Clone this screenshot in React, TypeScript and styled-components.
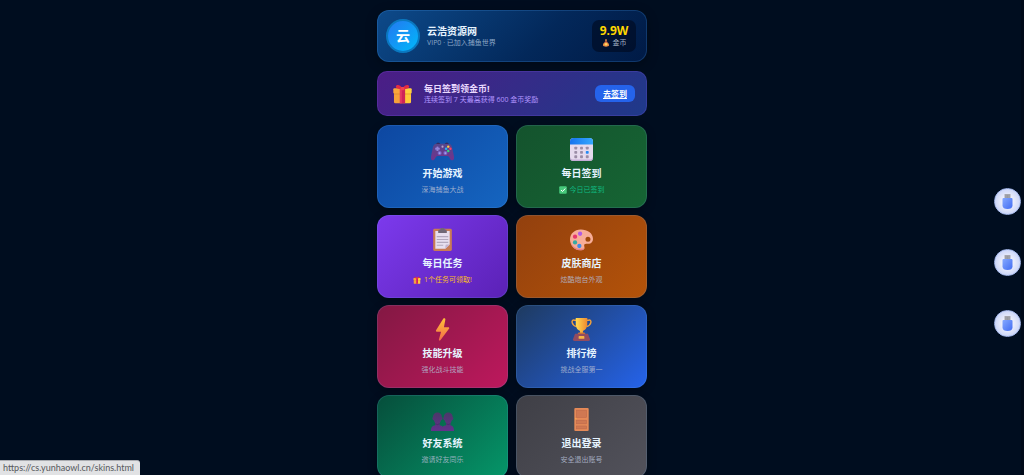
import React from 'react';
import styled, { createGlobalStyle } from 'styled-components';

const GlobalStyle = createGlobalStyle`
  * {
    box-sizing: border-box;
  }

  body {
    margin: 0;
    background: #000d1f;
    color: #e6f4ff;
    font-family: 'Open Sans', 'Noto Sans CJK SC', sans-serif;
  }

  h1, h2, h3, p {
    margin: 0;
  }

  a {
    color: inherit;
  }
`;

const Page = styled.div`
  height: 100vh;
  overflow-y: auto;
  scrollbar-width: none;
`;

const Container = styled.main`
  width: 100%;
  max-width: 270px;
  margin: 0 auto;
  padding: 10px 0;
  display: flex;
  flex-direction: column;
  gap: 9px;
`;

const Header = styled.header`
  display: flex;
  align-items: center;
  gap: 7px;
  min-height: 52px;
  padding: 7px 10px 7px 8px;
  border: 1px solid rgba(79, 172, 254, 0.2);
  border-radius: 12px;
  background: linear-gradient(135deg, #0d4a8a 0%, #03285a 60%, #001a45 100%);
  background-origin: border-box;
  box-shadow: 0 3px 12px rgba(0, 0, 0, 0.3);
`;

const Avatar = styled.div`
  display: flex;
  align-items: center;
  justify-content: center;
  width: 34px;
  height: 34px;
  border: 2px solid #0a78c0;
  border-radius: 50%;
  background: linear-gradient(135deg, #2478f0, #00b8fa);
  color: #fff;
  font-size: 14px;
  font-weight: 700;
  line-height: 20px;
`;

const HeaderText = styled.div`
  flex: 1;
`;

const UserName = styled.h1`
  font-size: 10px;
  line-height: 14px;
  font-weight: 700;
`;

const UserMeta = styled.p`
  font-size: 7px;
  line-height: 10px;
  color: #8ba6c6;
`;

const CoinBox = styled.div`
  min-width: 44px;
  padding: 4px 7px;
  border-radius: 7px;
  background: rgba(0, 8, 28, 0.6);
  text-align: center;
`;

const CoinValue = styled.div`
  color: #ffd700;
  font-size: 12px;
  line-height: 14px;
  font-weight: 700;
`;

const CoinLabel = styled.div`
  display: flex;
  align-items: center;
  justify-content: center;
  gap: 3px;
  font-size: 7px;
  line-height: 10px;
  color: #a3b1c5;
`;

const Banner = styled.section`
  display: flex;
  align-items: center;
  min-height: 45px;
  padding: 8px 11px 8px 14px;
  border: 1px solid rgba(139, 92, 246, 0.2);
  border-radius: 10px;
  background: linear-gradient(135deg, #4c1d86, #1e3a8a);
  background-origin: border-box;
`;

const BannerText = styled.div`
  flex: 1;
  margin-left: 11px;
`;

const BannerTitle = styled.h2`
  font-size: 9px;
  line-height: 12px;
  font-weight: 700;
  color: #ead9ff;
`;

const BannerSub = styled.p`
  font-size: 7px;
  line-height: 10px;
  color: #b296ff;
`;

const BannerLink = styled.a`
  padding: 2px 8px;
  border-radius: 6px;
  background: #2563eb;
  color: #fff;
  font-size: 8px;
  line-height: 13px;
  font-weight: 700;
`;

const Menu = styled.nav`
  display: grid;
  grid-template-columns: 1fr 1fr;
  gap: 7px 8px;
`;

const Card = styled.a<{ $from: string; $to: string }>`
  display: flex;
  flex-direction: column;
  align-items: center;
  min-height: 83px;
  padding: 12px 8px;
  border: 1px solid rgba(120, 190, 255, 0.14);
  border-radius: 12px;
  background: linear-gradient(135deg, ${props => props.$from}, ${props => props.$to});
  background-origin: border-box;
  box-shadow: 0 3px 10px rgba(0, 0, 0, 0.3);
  text-decoration: none;
`;

const CardTitle = styled.h3`
  margin-top: 5px;
  font-size: 10px;
  line-height: 14px;
  font-weight: 700;
`;

const CardSub = styled.p<{ $color?: string }>`
  display: flex;
  align-items: center;
  gap: 3px;
  margin-top: 5px;
  font-size: 7px;
  line-height: 10px;
  color: ${props => props.$color || 'rgba(180, 190, 212, 0.85)'};
`;

const FloatingTools = styled.aside`
  position: fixed;
  top: 188px;
  right: 3px;
  display: flex;
  flex-direction: column;
  gap: 34px;
`;

const ToolButton = styled.button`
  display: flex;
  align-items: center;
  justify-content: center;
  width: 27px;
  height: 27px;
  padding: 0;
  border: 1px solid #a9bdf0;
  border-radius: 50%;
  background: radial-gradient(circle, #eef0fc 30%, #c9d4f8 75%);
  cursor: pointer;
`;

const StatusBar = styled.div`
  position: fixed;
  left: 0;
  bottom: 0;
  padding: 1px 6px 1px 3px;
  border-top: 1px solid #a9abb0;
  border-radius: 0 3px 0 0;
  background: #e1e2e4;
  color: #55585c;
  font-family: Lato, 'Open Sans', sans-serif;
  font-size: 9px;
  line-height: 12px;
`;

const ScrollTrack = styled.div`
  position: fixed;
  top: 0;
  right: 0;
  bottom: 0;
  width: 3px;
  background: #000918;
`;

interface IconProps {
  size?: number;
}

const GiftIcon: React.FC<IconProps> = ({ size = 23 }) => (
  <svg width={size} height={size} viewBox="0 0 32 32" aria-hidden="true">
    <path d="M3 13h14v18H5a2 2 0 0 1-2-2z" fill="#f5a13a" />
    <path d="M17 13h12v16a2 2 0 0 1-2 2H17z" fill="#ffc93a" />
    <rect x="2" y="8" width="15" height="8" rx="1.5" fill="#f9a63a" />
    <rect x="16" y="8" width="14" height="8" rx="1.5" fill="#ffd03c" />
    <path d="M3 16h26v1.500H3z" fill="#d57b28" opacity=".5" />
    <path d="M12 8h8v23h-8z" fill="#cf2458" />
    <path d="M12 8h3v23h-3z" fill="#e43a62" />
    <path d="M16 9C14 3 7 1 6 5c-1 3 4 5 10 4zM16 9c2-6 9-8 10-4 1 3-4 5-10 4z" fill="#e32b43" />
    <rect x="13" y="6" width="6" height="5" rx="2" fill="#f0434f" />
  </svg>
);

const GamepadIcon: React.FC = () => (
  <svg width="23" height="23" viewBox="0 0 32 32" aria-hidden="true">
    <defs>
      <linearGradient id="pad" x1="0" y1="0" x2="0" y2="1">
        <stop offset="0" stopColor="#54478c" />
        <stop offset="1" stopColor="#74328c" />
      </linearGradient>
    </defs>
    <path d="M7 9c0-3 6-3 6 0zM19 9c0-3 6-3 6 0z" fill="#30204f" />
    <path d="M8 8h16c4 0 5 3 6 8 1 6 4 14 0 15-4 0-4-6-7-6H9c-3 0-3 6-7 6-4-1-1-9 0-15 1-5 2-8 6-8z" fill="url(#pad)" />
    <circle cx="9" cy="15" r="3.2" fill="#7262b8" />
    <path d="M8 12h2v2h2v2h-2v2H8v-2H6v-2h2z" fill="#9384d8" />
    <circle cx="12" cy="21" r="2.8" fill="#7966ca" />
    <circle cx="20" cy="21" r="2.8" fill="#7966ca" />
    <circle cx="12" cy="21" r="1.3" fill="#aea2ed" />
    <circle cx="20" cy="21" r="1.3" fill="#aea2ed" />
    <circle cx="16" cy="12" r="1.5" fill="#b7a5c9" />
    <circle cx="24" cy="12" r="1.7" fill="#ffcf3e" />
    <circle cx="21" cy="15" r="1.7" fill="#29b6f6" />
    <circle cx="27" cy="15" r="1.7" fill="#ff4268" />
    <circle cx="24" cy="18" r="1.7" fill="#35d77d" />
  </svg>
);

const CalendarIcon: React.FC = () => (
  <svg width="23" height="23" viewBox="0 0 32 32" aria-hidden="true">
    <defs>
      <linearGradient id="calTop">
        <stop stopColor="#1673ee" />
        <stop offset="1" stopColor="#35a8ff" />
      </linearGradient>
    </defs>
    <rect width="32" height="32" rx="5" fill="#e5daed" />
    <path d="M0 9V5a5 5 0 0 1 5-5h22a5 5 0 0 1 5 5v4z" fill="url(#calTop)" />
    <path d="M0 26c1 3 2 4 5 4h22c3 0 4-1 5-4v1a5 5 0 0 1-5 5H5a5 5 0 0 1-5-5z" fill="#c5acd7" />
    <g fill="#9b8da6">
      <rect x="6" y="12" width="4" height="4" rx="1" />
      <rect x="14" y="12" width="4" height="4" rx="1" />
      <rect x="22" y="12" width="4" height="4" rx="1" />
      <rect x="6" y="18" width="4" height="4" rx="1" />
      <rect x="14" y="18" width="4" height="4" rx="1" />
      <rect x="6" y="24" width="4" height="4" rx="1" />
      <rect x="14" y="24" width="4" height="4" rx="1" />
      <rect x="22" y="24" width="4" height="4" rx="1" />
    </g>
    <rect x="22" y="18" width="4" height="4" rx="1" fill="#2489f4" />
  </svg>
);

const ClipboardIcon: React.FC = () => (
  <svg width="23" height="23" viewBox="0 0 32 32" aria-hidden="true">
    <rect x="3" y="1" width="26" height="31" rx="2" fill="#c97b55" />
    <path d="M6 4h20v19l-6 6H6z" fill="#e6deee" />
    <path d="M26 23l-6 6v-4a2 2 0 0 1 2-2z" fill="#c2b2ce" />
    <path d="M10 7V4q0-2 3-2c0-3 6-3 6 0q3 0 3 2v3z" fill="#706875" />
    <path d="M8 12h16M8 16h16M8 20h16M8 24h9" stroke="#b3a9bd" strokeWidth="1.5" />
  </svg>
);

const PaletteIcon: React.FC = () => (
  <svg width="23" height="23" viewBox="0 0 32 32" aria-hidden="true">
    <path fillRule="evenodd" d="M15 2C6 2 0 8 0 16s6 15 15 15c4 0 6-2 5-5-1-4 1-4 5-4 5 0 7-3 7-7C32 7 24 2 15 2zm10 10a3.5 3.5 0 1 1 0 7 3.5 3.5 0 0 1 0-7z" fill="#f8ad98" />
    <path d="M1 19c2 7 8 10 14 10 3 0 4 0 5-2 0 3-2 4-5 4-8 0-13-5-14-12z" fill="#e88187" />
    <circle cx="14" cy="8" r="3" fill="#b05be5" />
    <circle cx="7" cy="12" r="3" fill="#e7366d" />
    <circle cx="7" cy="20" r="3" fill="#35aaa5" />
    <circle cx="13" cy="25" r="3" fill="#3f8ce8" />
  </svg>
);

const BoltIcon: React.FC = () => (
  <svg width="23" height="23" viewBox="0 0 32 32" aria-hidden="true">
    <defs>
      <linearGradient id="bolt" x1="0" y1="0" x2="0" y2="1">
        <stop stopColor="#ffc238" />
        <stop offset="1" stopColor="#f36b49" />
      </linearGradient>
    </defs>
    <path d="M17 1 7 17c-.5 1 0 2 1 2h6l-3 11c0 2 1 2 2 1l12-16c1-1 0-2-1-2h-6l2-11c0-2-2-2-3-1z" fill="url(#bolt)" />
  </svg>
);

const TrophyIcon: React.FC = () => (
  <svg width="23" height="23" viewBox="0 0 32 32" aria-hidden="true">
    <defs>
      <linearGradient id="cup">
        <stop stopColor="#ffdc50" />
        <stop offset="1" stopColor="#ee8930" />
      </linearGradient>
    </defs>
    <path d="M9 3H6C1 2 2 10 9 12M23 3h3c5-1 4 7-3 9" fill="none" stroke="#f3a23b" strokeWidth="2" />
    <path d="M8 0h16v8c0 6-3 9-6 10v4h-4v-4c-3-1-6-4-6-10z" fill="url(#cup)" />
    <path d="M12 20h8l2 3H10z" fill="#d97a2c" />
    <path d="M7 22h18l3 8c0 1-1 2-2 2H6c-1 0-2-1-2-2z" fill="#914b60" />
    <rect x="12" y="25" width="8" height="4" rx="1" fill="#f6b644" />
  </svg>
);

const FriendsIcon: React.FC = () => (
  <svg width="23" height="23" viewBox="0 0 32 32" aria-hidden="true">
    <defs>
      <linearGradient id="bust" x1="0" y1="0" x2="0" y2="1">
        <stop stopColor="#4a3868" />
        <stop offset="1" stopColor="#63318c" />
      </linearGradient>
    </defs>
    <g fill="url(#bust)">
      <path d="M3 13c-1-9 13-9 12 0 2 0 1 4-1 4l-2 5v2c4 1 6 2 6 8H0c0-6 2-7 6-8v-2l-2-5c-2 0-3-4-1-4z" />
      <path d="M18 13c-1-9 13-9 12 0 2 0 1 4-1 4l-2 5v2c3 1 5 2 5 8H15c0-6 2-7 6-8v-2l-2-5c-2 0-3-4-1-4z" />
    </g>
    <path d="M6 22q3 2 6 0M21 22q3 2 6 0" stroke="#442a66" fill="none" />
  </svg>
);

const DoorIcon: React.FC = () => (
  <svg width="23" height="23" viewBox="0 0 32 32" aria-hidden="true">
    <rect x="6" y="0" width="20" height="32" rx="1.500" fill="#e58a58" />
    <g fill="#cf7852" stroke="#bb684c" strokeWidth=".8">
      <rect x="9" y="3" width="14" height="10" />
      <rect x="9" y="17" width="14" height="5" />
      <rect x="9" y="25" width="14" height="4" />
    </g>
    <circle cx="8" cy="15" r="1" fill="#ffb04a" />
  </svg>
);

const MoneyBagIcon: React.FC = () => (
  <svg width="8" height="8" viewBox="0 0 32 32" aria-hidden="true">
    <path d="M12 2q4-3 8 0l-2 9c8 4 11 10 10 15-1 6-23 6-24 0-1-5 2-11 10-15z" fill="#e98b46" />
    <path d="M11 10h10v3H11z" fill="#a73a45" />
    <circle cx="16" cy="21" r="5" fill="#ffd45b" />
  </svg>
);

const CheckIcon: React.FC = () => (
  <svg width="8" height="8" viewBox="0 0 32 32" aria-hidden="true">
    <rect x="1" y="1" width="30" height="30" rx="4" fill="#47c97c" />
    <path d="M8 16l6 6L25 10" fill="none" stroke="#fff" strokeWidth="4" />
  </svg>
);

const BottleIcon: React.FC = () => (
  <svg width="11" height="17" viewBox="0 0 22 34" aria-hidden="true">
    <defs>
      <linearGradient id="bottle" x1="0" y1="0" x2="1" y2="1">
        <stop stopColor="#84a8ff" />
        <stop offset="1" stopColor="#426cf2" />
      </linearGradient>
    </defs>
    <rect x="5" y="2" width="12" height="9" rx="1" fill="#a5a6ae" />
    <path d="M8 4v6M11 4v6M14 4v6" stroke="#8b8c95" />
    <path d="M1 12q0-2 2-2h16q2 0 2 2v13c0 5-4 7-10 7S1 30 1 25z" fill="url(#bottle)" />
  </svg>
);

interface MenuItem {
  title: string;
  sub: string;
  href: string;
  from: string;
  to: string;
  icon: React.ReactNode;
  subIcon?: React.ReactNode;
  subColor?: string;
}

const menuItems: MenuItem[] = [
  { title: '开始游戏', sub: '深海捕鱼大战', href: '#game', from: '#0d47a1', to: '#1565c0', icon: <GamepadIcon /> },
  { title: '每日签到', sub: '今日已签到', href: '#checkin', from: '#14532d', to: '#166534', icon: <CalendarIcon />, subIcon: <CheckIcon />, subColor: '#10b981' },
  { title: '每日任务', sub: '1个任务可领取!', href: '#tasks', from: '#7c3aed', to: '#5b21b6', icon: <ClipboardIcon />, subIcon: <GiftIcon size={8} />, subColor: '#fbbf24' },
  { title: '皮肤商店', sub: '炫酷炮台外观', href: '#skins', from: '#92400e', to: '#b45309', icon: <PaletteIcon /> },
  { title: '技能升级', sub: '强化战斗技能', href: '#skills', from: '#831843', to: '#be185d', icon: <BoltIcon /> },
  { title: '排行榜', sub: '挑战全服第一', href: '#rank', from: '#1e3a5f', to: '#2563eb', icon: <TrophyIcon /> },
  { title: '好友系统', sub: '邀请好友同乐', href: '#friends', from: '#064e3b', to: '#059669', icon: <FriendsIcon /> },
  { title: '退出登录', sub: '安全退出账号', href: '#logout', from: '#3f3f46', to: '#52525b', icon: <DoorIcon /> }
];

const App: React.FC = () => {
  return (
    <Page>
      <GlobalStyle />
      <Container>
        <Header>
          <Avatar>云</Avatar>
          <HeaderText>
            <UserName>云浩资源网</UserName>
            <UserMeta>VIP0 · 已加入捕鱼世界</UserMeta>
          </HeaderText>
          <CoinBox>
            <CoinValue>9.9W</CoinValue>
            <CoinLabel><MoneyBagIcon />金币</CoinLabel>
          </CoinBox>
        </Header>

        <Banner>
          <GiftIcon size={21} />
          <BannerText>
            <BannerTitle>每日签到领金币!</BannerTitle>
            <BannerSub>连续签到 7 天最高获得 600 金币奖励</BannerSub>
          </BannerText>
          <BannerLink href="#checkin">去签到</BannerLink>
        </Banner>

        <Menu>
          {menuItems.map(item => (
            <Card key={item.title} href={item.href} $from={item.from} $to={item.to}>
              {item.icon}
              <CardTitle>{item.title}</CardTitle>
              <CardSub $color={item.subColor}>{item.subIcon}{item.sub}</CardSub>
            </Card>
          ))}
        </Menu>
      </Container>

      <ScrollTrack />
      <FloatingTools>
        {[1, 2, 3].map(n => (
          <ToolButton key={n} type="button" aria-label={`工具 ${n}`}><BottleIcon /></ToolButton>
        ))}
      </FloatingTools>
      <StatusBar>https://cs.yunhaowl.cn/skins.html</StatusBar>
    </Page>
  );
};

export default App;
